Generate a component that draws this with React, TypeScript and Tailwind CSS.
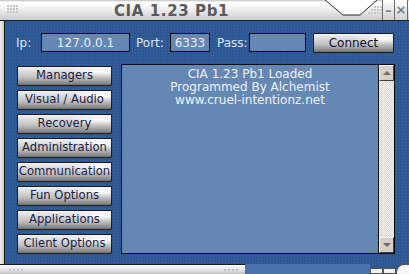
import React from "react";

const font = { fontFamily: '"DejaVu Sans", Verdana, sans-serif' };

const menu = [
  "Managers",
  "Visual / Audio",
  "Recovery",
  "Administration",
  "Communication",
  "Fun Options",
  "Applications",
  "Client Options",
];

function SilverButton({ label, className }: { label: string; className: string }) {
  return (
    <div
      className={
        "relative flex items-center justify-center border border-[#1e1e1e] rounded-[1px] leading-none text-[#1b1b46] " +
        "[background-image:radial-gradient(ellipse_at_90%_25%,rgba(255,255,255,0.95)_0%,rgba(255,255,255,0)_30%),linear-gradient(to_bottom,#f0f0f0_0%,#d8d8d8_30%,#bdbdbd_60%,#939393_85%,#707070_100%)] " +
        className
      }
    >
      <span className="relative top-[0px]">{label}</span>
    </div>
  );
}

function Dots({ cols, rows }: { cols: number; rows: number }) {
  return (
    <div className="flex flex-col gap-[1px]">
      {Array.from({ length: rows }).map((_, r) => (
        <div key={r} className="flex gap-[1px]">
          {Array.from({ length: cols }).map((_, c) => (
            <div key={c} className="w-[2px] h-[2px] bg-[#c4c4c4]" />
          ))}
        </div>
      ))}
    </div>
  );
}

export default function App() {
  return (
    <div
      className="w-[409px] h-[274px] overflow-hidden flex flex-col bg-[#2d5894] select-none"
      style={font}
    >
      {/* Title bar */}
      <div className="relative h-[21px] flex items-stretch border-b border-[#14233a] [background-image:linear-gradient(to_bottom,#bdbdbd_0px,#ffffff_2px,#fbfbfb_5px,#e6e6e6_12px,#cbcbcb_20px)]">
        <div className="absolute left-[7px] top-[5px]">
          <Dots cols={4} rows={3} />
        </div>
        <div className="w-[343px] flex items-center justify-center">
          <span className="text-[15px] font-bold tracking-[0.6px] text-[#5a5a5a] leading-none relative top-[1px]">
            CIA 1.23 Pb1
          </span>
        </div>
        <svg className="absolute left-[320px] top-0" width="66" height="21" viewBox="0 0 66 21">
          <polygon points="5,0 23,15 40,15 57,0" fill="#ffffff" />
          <polyline points="5,0 23,15 40,15 57,0" fill="none" stroke="#2a2a2a" strokeWidth="1" />
          {[
            [48, 12],
            [51, 9],
            [54, 6],
            [51, 12],
            [54, 9],
            [57, 6],
            [54, 12],
            [57, 9],
            [60, 12],
            [60, 6],
            [57, 12],
            [60, 9],
          ].map(([x, y], i) => (
            <rect key={i} x={x} y={y} width="2" height="2" fill="#c8c8c8" />
          ))}
        </svg>
        <div className="flex-1" />
        <div className="w-[13px] border-l border-r border-[#6a6a6a] flex items-center justify-center text-[#7a7a7a] text-[13px] font-bold [background-image:linear-gradient(to_bottom,#ffffff,#d0d0d0)]">
          <span className="relative top-[1px]">–</span>
        </div>
        <div className="w-[13px] border-r border-[#6a6a6a] mr-[1px] flex items-center justify-center text-[#7a7a7a] text-[13px] font-bold [background-image:linear-gradient(to_bottom,#ffffff,#d0d0d0)]">
          <span className="relative top-[0px]">×</span>
        </div>
      </div>

      {/* Middle */}
      <div className="flex-1 flex">
        <div className="w-[5px] border-r border-[#1a1a1a] [background-image:linear-gradient(to_right,#f0f0f0,#c8c8c8)]" />
        <div className="flex-1 flex flex-col pl-[11px] pt-[12px] [background-image:radial-gradient(circle,#3b67a3_0.8px,transparent_1px)] [background-size:3px_3px]">
          {/* Top row */}
          <div className="flex items-center h-[19px] text-[12px] text-[#dbe5f2]">
            <div className="w-[25px] leading-none">Ip:</div>
            <div className="w-[89px] h-[19px] border border-[#0c0c0c] bg-[#6587b3] flex items-center justify-center leading-none text-[#e6edf7]">
              127.0.0.1
            </div>
            <div className="ml-[6px] w-[34px] leading-none">Port:</div>
            <div className="w-[40px] h-[19px] border border-[#0c0c0c] bg-[#6587b3] flex items-center justify-center leading-none text-[#e6edf7]">
              6333
            </div>
            <div className="ml-[7px] w-[32px] leading-none">Pass:</div>
            <div className="w-[57px] h-[19px] border border-[#0c0c0c] bg-[#6587b3]" />
            <SilverButton label="Connect" className="ml-[7px] w-[81px] h-[20px] text-[12px] text-[#101030]" />
          </div>

          {/* Main row */}
          <div className="flex mt-[12px]">
            <div className="ml-[1px] mt-[2px] flex flex-col gap-[4px]">
              {menu.map((m) => (
                <SilverButton key={m} label={m} className="w-[95px] h-[20px] text-[11.6px]" />
              ))}
            </div>
            <div className="ml-[9px] w-[274px] h-[190px] border border-[#0c0c0c] bg-[#6587b3] flex">
              <div className="flex-1 flex flex-col items-center pt-[3px] text-[12px] leading-[13px] text-[#eef3fa]">
                <div>CIA 1.23 Pb1 Loaded</div>
                <div>Programmed By Alchemist</div>
                <div>www.cruel-intentionz.net</div>
              </div>
              <div className="w-[16px] flex flex-col border-l border-[#0c0c0c] bg-[#ffffff] [background-image:repeating-conic-gradient(#d4d0c8_0%_25%,#ffffff_0%_50%)] [background-size:2px_2px]">
                <div className="h-[16px] bg-[#d4d0c8] border-t border-l border-[#f4f4f4] border-r border-b border-r-[#404040] border-b-[#404040] flex items-center justify-center">
                  <svg width="8" height="4" viewBox="0 0 8 4">
                    <polygon points="4,0 8,4 0,4" fill="#6a6a6a" />
                  </svg>
                </div>
                <div className="flex-1" />
                <div className="h-[16px] bg-[#d4d0c8] border-t border-l border-[#f4f4f4] border-r border-b border-r-[#404040] border-b-[#404040] flex items-center justify-center">
                  <svg width="8" height="4" viewBox="0 0 8 4">
                    <polygon points="0,0 8,0 4,4" fill="#6a6a6a" />
                  </svg>
                </div>
              </div>
            </div>
          </div>
        </div>
      </div>

      {/* Bottom bar */}
      <div className="h-[10px] flex">
        <div className="relative w-[245px] border-t border-[#1a1a1a] [background-image:linear-gradient(to_bottom,#ffffff,#dcdcdc_70%,#bcbcbc)]">
          <div className="absolute left-[9px] top-[4px] flex gap-[2px]">
            {[0, 1, 2, 3].map((i) => (
              <div key={i} className="w-[2px] h-[2px] bg-[#c4c4c4]" />
            ))}
          </div>
          <div className="absolute left-[224px] top-[4px] flex gap-[2px]">
            {[0, 1, 2, 3].map((i) => (
              <div key={i} className="w-[2px] h-[2px] bg-[#bcbcbc]" />
            ))}
          </div>
        </div>
        <div className="flex-1 bg-[#4a72aa]" />
        <div className="w-[39px] flex items-end">
          <div className="h-[6px] w-[13px] border border-[#555] bg-[#f2f2f2]" />
          <div className="h-[6px] w-[13px] border border-[#555] bg-[#f2f2f2]" />
          <div className="h-[10px] w-[13px] rounded-tl-[8px] bg-[#f6f6f6] border-l border-t border-[#555]" />
        </div>
      </div>
    </div>
  );
}
